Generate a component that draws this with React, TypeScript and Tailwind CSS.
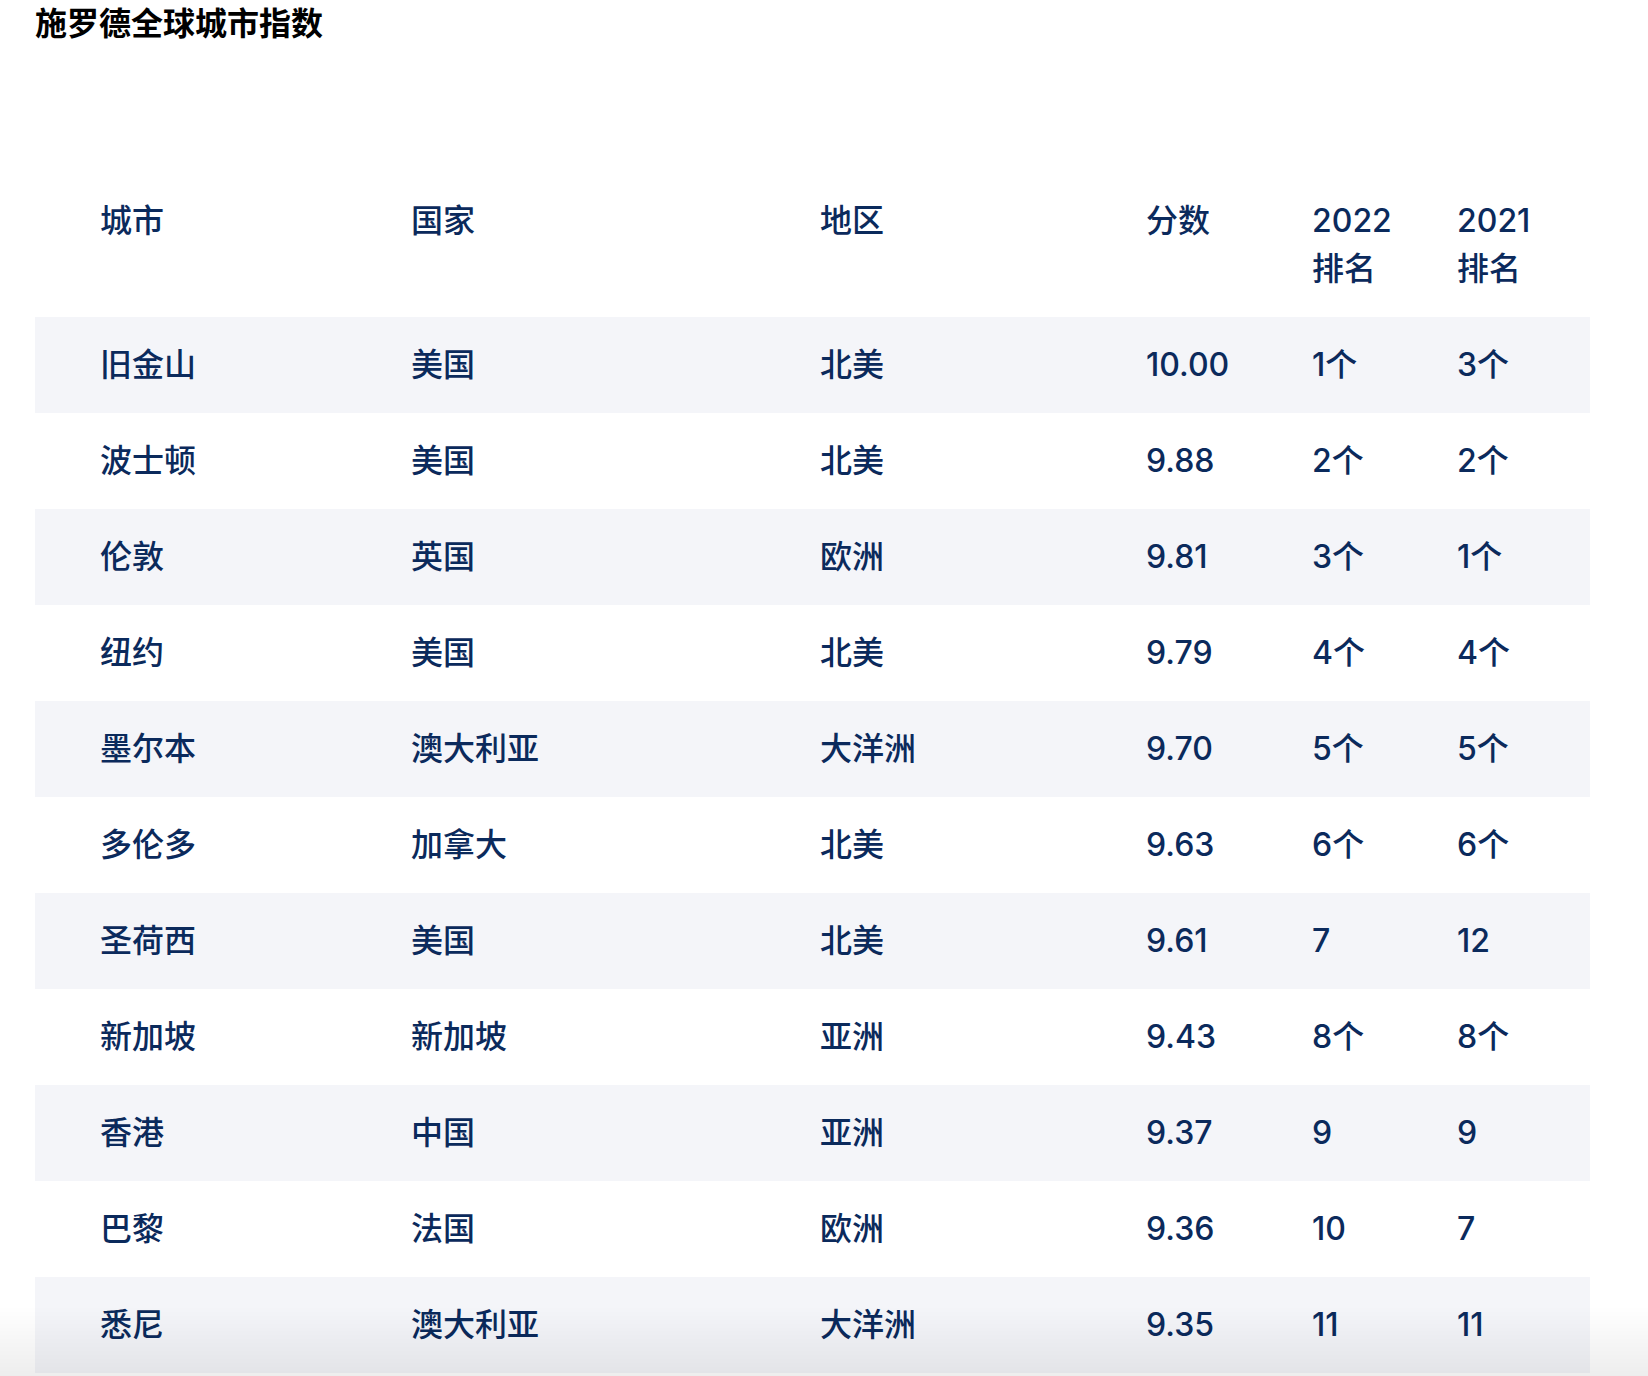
import * as React from 'react';

const rows = [
  ['旧金山', '美国', '北美', '10.00', '1个', '3个'],
  ['波士顿', '美国', '北美', '9.88', '2个', '2个'],
  ['伦敦', '英国', '欧洲', '9.81', '3个', '1个'],
  ['纽约', '美国', '北美', '9.79', '4个', '4个'],
  ['墨尔本', '澳大利亚', '大洋洲', '9.70', '5个', '5个'],
  ['多伦多', '加拿大', '北美', '9.63', '6个', '6个'],
  ['圣荷西', '美国', '北美', '9.61', '7', '12'],
  ['新加坡', '新加坡', '亚洲', '9.43', '8个', '8个'],
  ['香港', '中国', '亚洲', '9.37', '9', '9'],
  ['巴黎', '法国', '欧洲', '9.36', '10', '7'],
  ['悉尼', '澳大利亚', '大洋洲', '9.35', '11', '11'],
];

const cols = 'grid grid-cols-[311px_409px_326px_166px_145px_1fr] pl-[65px]';

export default function App() {
  return (
    <div className="relative min-h-[1376px] bg-white pl-[35px] font-['Inter','Noto_Sans_CJK_SC',sans-serif]">
      <h2 className="text-[32px] leading-[48px] font-bold text-black">施罗德全球城市指数</h2>

      <div className="mt-[125px] w-[1555px] text-[32px] leading-[48px] font-medium text-[#0b2a5c]">
        {/* Header */}
        <div className={`${cols} py-6`}>
          <div>城市</div>
          <div>国家</div>
          <div>地区</div>
          <div>分数</div>
          <div>2022<br />排名</div>
          <div>2021<br />排名</div>
        </div>

        {rows.map((r, i) => (
          <div key={r[0]} className={`${cols} py-6 ${i % 2 === 0 ? 'bg-[#f4f5f9]' : 'bg-white'}`}>
            {r.map((c, j) => (
              <div key={j}>{c}</div>
            ))}
          </div>
        ))}
      </div>

      {/* bottom fade */}
      <div className="pointer-events-none fixed bottom-0 left-0 right-0 h-[70px] bg-gradient-to-b from-transparent to-black/[0.07]" />
    </div>
  );
}
